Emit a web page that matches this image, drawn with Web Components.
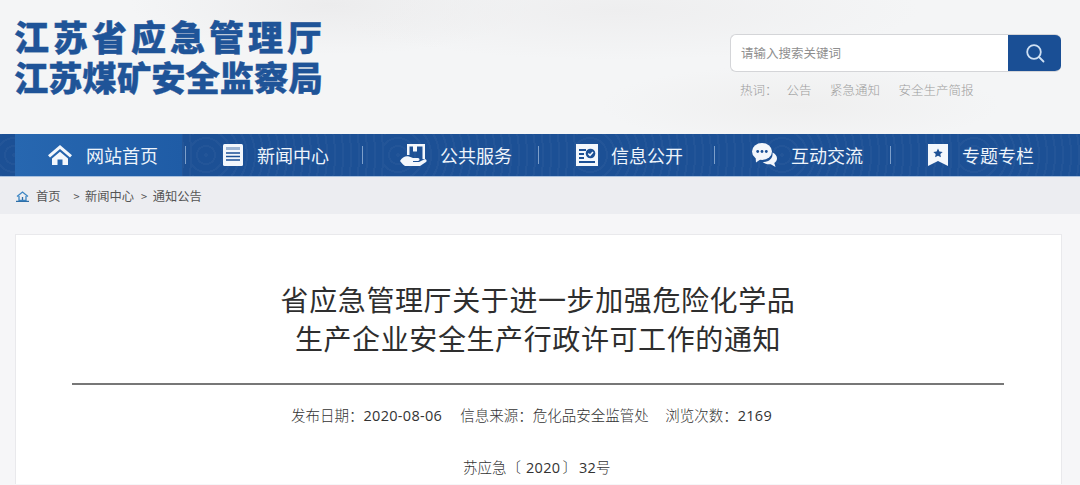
<!DOCTYPE html>
<html lang="zh-CN"><head><meta charset="utf-8"><title>江苏省应急管理厅</title>
<style>
html,body{margin:0;height:485px;overflow:hidden;background:#f6f6f8;font-family:"Noto Sans CJK SC","Noto Sans",sans-serif;color:#444}
</style></head><body>
<site-header></site-header>
<site-nav>
 <nav-item pad="33" gap="14" active label="网站首页"><svg viewBox="0 0 24 20" width="24" height="20"><path fill="#f3f7fc" d="M12 0 0 10.200l2 2.300L12 4l10 8.500 2-2.300zM4 13.500V20h5.500v-5.500h5V20H20v-6.500L12 6.700z"/></svg></nav-item>
 <nav-item pad="36" gap="14" label="新闻中心"><svg viewBox="0 0 20 22" width="20" height="22"><rect width="20" height="22" rx="1.500" fill="#f3f7fc"/><path stroke="#1c5095" stroke-width="1.600" d="M3 9h14M3 12.500h14M3 16h14"/><rect x="3" y="3" width="14" height="3" fill="#9db5d4"/></svg></nav-item>
 <nav-item pad="37" gap="13" label="公共服务"><svg viewBox="0 0 27 22" width="27" height="22"><path fill="#f3f7fc" d="M7 0h18v15h-2.500V2.500H17v5h-4v-5H9.500V11H7z"/><path fill="#f3f7fc" d="M0 17c2-4 6-5.500 9-4.500l4 1.500h5c2 0 2 3 0 3h-5v1h6l5-2.500c2-1 3.500 1 2 2.500L20 22H5l-2-1.500z"/></svg></nav-item>
 <nav-item pad="37" gap="13" label="信息公开"><svg viewBox="0 0 22 22" width="22" height="22"><rect width="22" height="22" fill="#f3f7fc"/><path stroke="#1c5095" stroke-width="1.800" fill="none" d="M3 6h7M3 10h5M3 14h5M3 18h16"/><circle cx="14.500" cy="9.500" r="4.800" fill="#1c5095"/><path stroke="#f3f7fc" stroke-width="1.500" fill="none" d="m12.300 9.500 1.700 1.800 3-3.200"/></svg></nav-item>
 <nav-item pad="37" gap="14" label="互动交流"><svg viewBox="0 0 25 24" width="25" height="24"><path fill="#f3f7fc" d="M20.500 9.500c2.700 1.200 4.500 3.300 4.500 5.800 0 2-1 3.600-2.700 4.800l1.200 3.900-4.800-2.800c-3 .3-6-.4-8-2.300 5.800.6 10.600-3.300 9.800-9.400z"/><ellipse cx="10" cy="8.500" rx="10" ry="8.500" fill="#f3f7fc"/><path fill="#f3f7fc" d="m3.500 13 .5 6.500 5-3.500z"/><circle cx="5.700" cy="8.500" r="1.400" fill="#1c5095"/><circle cx="10" cy="8.500" r="1.400" fill="#1c5095"/><circle cx="14.300" cy="8.500" r="1.400" fill="#1c5095"/></svg></nav-item>
 <nav-item pad="37" gap="14" last label="专题专栏"><svg viewBox="0 0 20 22" width="20" height="22"><path fill="#f3f7fc" d="M0 0h20v22l-10-5-10 5z"/><path fill="#1c5095" d="m10 4.500 1.400 3 3.300.4-2.400 2.200.6 3.200-2.900-1.600-2.900 1.600.6-3.200-2.400-2.200 3.300-.4z"/></svg></nav-item>
</site-nav>
<bread-crumb></bread-crumb>
<article-card></article-card>
<script>
const FONT='"Noto Sans CJK SC","Noto Sans",sans-serif';
const COLON='<span style="font-family:\'Noto Sans CJK TC\',sans-serif">：</span>';
class SearchBox extends HTMLElement{constructor(){super();this.attachShadow({mode:'open'}).innerHTML=`<style>
:host{display:block;width:331px}
.box{display:flex;height:38px;box-sizing:border-box;background:#fff;border:1px solid #d4d5d8;border-right:0;border-radius:6px;overflow:hidden}
.ph{flex:1;padding-left:10px;font:12.500px/36px ${FONT};color:#8f8f8f}
.btn{width:53px;margin:-1px 0;background:#1a4f95;display:flex;align-items:center;justify-content:center}
.hot{display:flex;font:300 12.500px/18px ${FONT};color:#9c9c9c;margin-top:9px;padding-left:10px}
.hot span.i{margin-right:18.500px}.hot span.i:first-child{margin-right:9px}
</style><div class="box"><span class="ph">请输入搜索关键词</span><span class="btn"><svg width="20" height="20" viewBox="0 0 20 20" fill="none" stroke="#cfe0f3" stroke-width="1.800"><circle cx="9" cy="9" r="6.800"/><path d="m14 14 4.500 4.500" stroke-linecap="round"/></svg></span></div>
<div class="hot"><span class="i">热词${COLON}</span><span class="i">公告</span><span class="i">紧急通知</span><span class="i">安全生产简报</span></div>`}}
customElements.define('search-box',SearchBox);
class SiteHeader extends HTMLElement{constructor(){super();this.attachShadow({mode:'open'}).innerHTML=`<style>
:host{display:block;height:134px;box-sizing:border-box;padding:0 19px 0 14px;background:radial-gradient(ellipse 300px 50px at 620px 10px,#eeeeef,transparent),radial-gradient(ellipse 200px 40px at 800px 105px,#efefef,transparent),radial-gradient(ellipse 200px 50px at 330px 5px,#ececed,transparent),#f4f5f6}
.wrap{display:flex;justify-content:space-between;align-items:flex-start}
.logo{margin-top:19px;color:#1f5498;font-family:"Liberation Sans","Noto Sans CJK SC",sans-serif;font-weight:900;white-space:nowrap;-webkit-text-stroke:.4px #1f5498}
.logo div:first-child{font-size:35px;letter-spacing:4px;line-height:40px}.logo div:last-child{font-size:34.300px;line-height:41px}
search-box{margin-top:34px}
</style><div class="wrap"><div class="logo"><div>江苏省应急管理厅</div><div>江苏煤矿安全监察局</div></div><search-box></search-box></div>`}}
customElements.define('site-header',SiteHeader);
class SiteNav extends HTMLElement{constructor(){super();this.attachShadow({mode:'open'}).innerHTML=`<style>
:host{display:flex;height:43px;box-sizing:border-box;border-bottom:1px solid #a9c1df;padding-left:15px;background-color:#1c5095;background-image:repeating-radial-gradient(circle at 14px 21px,rgba(255,255,255,.03) 0 2px,transparent 2px 8px);background-size:192px 42px;background-repeat:repeat-x}
</style><slot></slot>`}}
customElements.define('site-nav',SiteNav);
class NavItem extends HTMLElement{constructor(){super();this.attachShadow({mode:'open'}).innerHTML=`<style>
:host{display:flex;width:176px;height:42px;box-sizing:border-box;position:relative;align-items:center;color:#eef4fb;font:400 18px/42px ${FONT};white-space:nowrap;flex:none}
:host([active]){background:linear-gradient(90deg,#2767b0,#1f5ca6);width:167px;margin-right:5px}
:host::after{content:"";position:absolute;right:0;top:12px;height:18px;width:1px;background:rgba(190,212,238,.6)}
:host([active])::after{right:-4px}
:host([last])::after{display:none}
.ic{display:flex}
</style><span class="ic"><slot></slot></span><span class="t"></span>`}
connectedCallback(){const s=this.shadowRoot;s.querySelector('.t').textContent=this.getAttribute('label');this.style.paddingLeft=this.getAttribute('pad')+'px';s.querySelector('.ic').style.marginRight=this.getAttribute('gap')+'px'}}
customElements.define('nav-item',NavItem);
class BreadCrumb extends HTMLElement{constructor(){super();this.attachShadow({mode:'open'}).innerHTML=`<style>
:host{display:flex;align-items:center;height:37px;box-sizing:border-box;padding:1px 0 0 16px;background:#ecedf1;font:12.250px/36px ${FONT};color:#555}
svg{margin-right:7px}.h{margin-right:13px}.g{margin:0 3px 0 0;font-size:11px}.m{margin-right:7px}
</style><svg width="13" height="11" viewBox="0 0 13 11"><path fill="none" stroke="#3d86c4" stroke-width="1.300" d="M1 5.500 6.500 1 12 5.500M3 5v4.500h7V5"/><path stroke="#2f6fa8" stroke-width="1.300" d="M0 10.500h13M6.500 6v3"/></svg><span class="h">首页</span><span class="g">&gt;&nbsp;</span><span class="m">新闻中心</span><span class="g">&gt;&nbsp;</span><span>通知公告</span>`}}
customElements.define('bread-crumb',BreadCrumb);
class ArticleCard extends HTMLElement{constructor(){super();this.attachShadow({mode:'open'}).innerHTML=`<style>
:host{display:block;margin:20px 18px 0 15px;height:250px;box-sizing:border-box;background:#fff;border:1px solid #e9e9ec;border-bottom:0;padding:45px 57px 0 56px;text-align:center}
h1{margin:0;font:400 28px/39px ${FONT};letter-spacing:.6px;color:#2e2e2e;padding-bottom:25px;border-bottom:2px solid #777}
.meta,.no{font:300 14.500px/20px ${FONT};color:#333;white-space:pre;text-align:left}
.n{font-family:"Open Sans",sans-serif;font-weight:400;letter-spacing:.3px}
.meta{margin-top:20px;display:flex;padding-left:219px}
.meta span.s{margin-right:18px}.meta span.s+span.s{margin-right:16.500px}
.no{margin-top:31px;padding-left:391px}
.y{margin:0 2px 0 5px}.z{margin-left:2px}
</style><h1>省应急管理厅关于进一步加强危险化学品<br>生产企业安全生产行政许可工作的通知</h1>
<div class="meta"><span class="s">发布日期${COLON}<span class="n">2020-08-06</span></span><span class="s">信息来源${COLON}危化品安全监管处</span><span>浏览次数${COLON}<span class="n">2169</span></span></div><div class="no">苏应急〔<span class="n y">2020</span>〕<span class="n z">32</span>号</div>`}}
customElements.define('article-card',ArticleCard);
</script></body></html>
